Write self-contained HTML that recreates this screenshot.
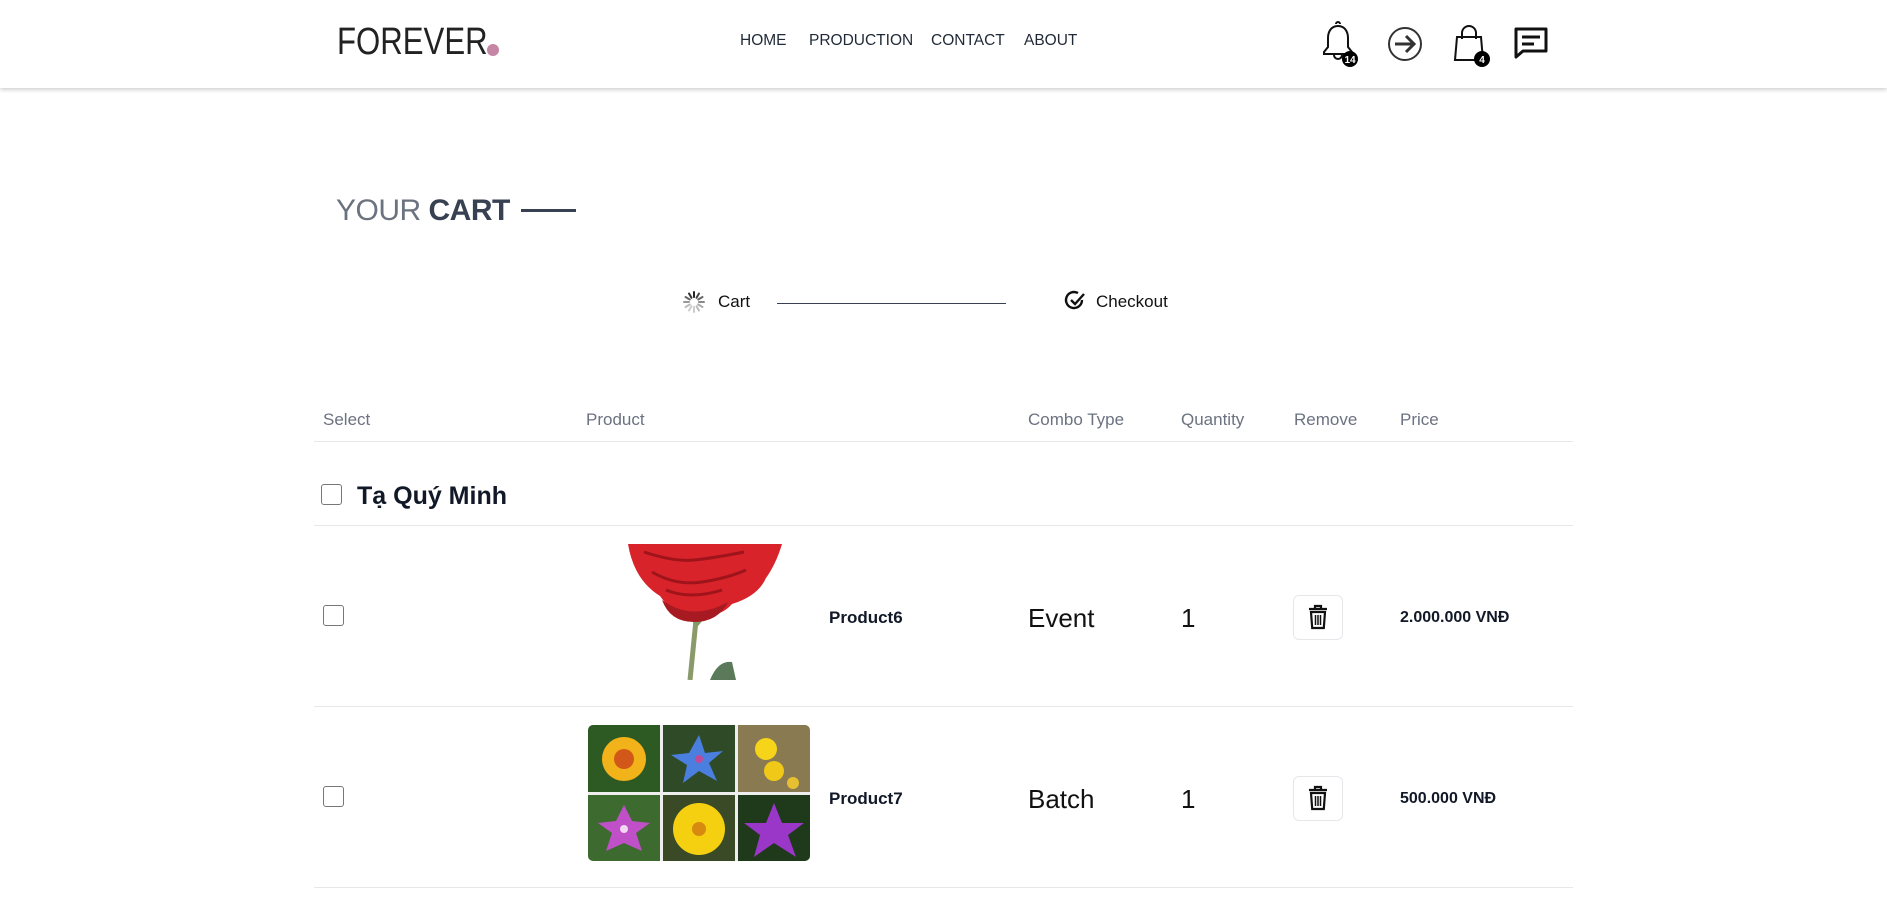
<!DOCTYPE html>
<html><head><meta charset="utf-8">
<style>
*{margin:0;padding:0;box-sizing:border-box}
body{width:1887px;height:919px;background:#fff;font-family:"Liberation Sans","Noto Sans CJK SC",sans-serif;position:relative;overflow:hidden;color:#111}
.a{position:absolute;white-space:nowrap}
.hdr{position:absolute;left:0;top:0;width:1887px;height:88px;background:#fff;box-shadow:0 2px 4px rgba(0,0,0,.18)}
.nav{font-size:15.5px;color:#1f2937;top:32px}
.th{font-size:17px;color:#6b7280;top:410px}
.line{position:absolute;left:314px;width:1259px;height:1px;background:#e5e7eb}
.cb{position:absolute;width:21px;height:21px;border:1.5px solid #777;border-radius:3px;background:#fff}
.big{font-size:26px;color:#111}
.pn{font-size:17px;font-weight:bold;color:#111827}
.pr{font-size:16px;font-weight:bold;color:#111827}
.rm{position:absolute;width:50px;height:45px;border:1px solid #e5e7eb;border-radius:6px;background:#fff}
</style></head><body>
<div class="hdr"></div>
<div class="a" style="left:337px;top:21px;font-size:38px;color:#222;transform:scaleX(.82);transform-origin:left top">FOREVER</div>
<div class="a" style="left:487px;top:44px;width:12px;height:12px;border-radius:50%;background:#c586a5"></div>
<div class="a nav" style="left:740px">HOME</div>
<div class="a nav" style="left:809px">PRODUCTION</div>
<div class="a nav" style="left:931px">CONTACT</div>
<div class="a nav" style="left:1024px">ABOUT</div>

<svg class="a" style="left:1318px;top:20px" width="40" height="50" viewBox="0 0 40 50">
<path d="M18 4a2 2 0 0 1 4 0M20 6c-7 0-10 6-10 12v9l-4 5v2h28v-2l-4-5v-9c0-6-3-12-10-12zM16 35a4 4 0 0 0 8 0" fill="none" stroke="#111" stroke-width="2"/>
<circle cx="32" cy="39" r="8" fill="#000"/><text x="32" y="43" font-size="10" font-weight="bold" fill="#fff" text-anchor="middle" font-family="Liberation Sans">14</text></svg>
<svg class="a" style="left:1387px;top:26px" width="36" height="36" viewBox="0 0 36 36">
<circle cx="18" cy="18" r="16" fill="none" stroke="#333" stroke-width="2"/>
<path d="M8 18h19M19 10l8 8-8 8" fill="none" stroke="#333" stroke-width="3"/></svg>
<svg class="a" style="left:1452px;top:24px" width="44" height="46" viewBox="0 0 44 46">
<path d="M5 13h24l2 23H3z" fill="none" stroke="#111" stroke-width="2"/>
<path d="M10 15V9a7 7 0 0 1 14 0v6" fill="none" stroke="#111" stroke-width="2"/>
<circle cx="30" cy="35" r="8" fill="#000"/><text x="30" y="39" font-size="10" font-weight="bold" fill="#fff" text-anchor="middle" font-family="Liberation Sans">4</text></svg>
<svg class="a" style="left:1513px;top:25px" width="36" height="36" viewBox="0 0 36 36">
<path d="M3 4h30v22H10l-7 6z" fill="none" stroke="#111" stroke-width="3" stroke-linejoin="round"/>
<path d="M9 12h18M9 19h12" stroke="#111" stroke-width="3"/></svg>

<div class="a" style="left:336px;top:194px;font-size:30px;color:#6b7280;letter-spacing:-0.5px">YOUR <b style="color:#374151">CART</b></div>
<div class="a" style="left:521px;top:209px;width:55px;height:3px;background:#374151"></div>

<svg class="a" style="left:682px;top:290px" width="24" height="24" viewBox="0 0 24 24">
<g stroke-width="2" stroke-linecap="round">
<path d="M12 2v5" stroke="#222"/><path d="M17 3.5l-2.5 4.3" stroke="#444"/><path d="M20.5 7l-4.3 2.5" stroke="#666"/><path d="M22 12h-5" stroke="#888"/><path d="M20.5 17l-4.3-2.5" stroke="#aaa"/><path d="M17 20.5l-2.5-4.3" stroke="#bbb"/><path d="M12 22v-5" stroke="#ccc"/><path d="M7 20.5l2.5-4.3" stroke="#ccc"/><path d="M3.5 17l4.3-2.5" stroke="#bbb"/><path d="M2 12h5" stroke="#999"/><path d="M3.5 7l4.3 2.5" stroke="#666"/><path d="M7 3.5l2.5 4.3" stroke="#333"/></g></svg>
<div class="a" style="left:718px;top:292px;font-size:17px;color:#111">Cart</div>
<div class="a" style="left:777px;top:303px;width:229px;height:1px;background:#374151"></div>
<svg class="a" style="left:1063px;top:289px" width="24" height="24" viewBox="0 0 24 24">
<path d="M19 11a8 8 0 1 1-4-6.9" fill="none" stroke="#111" stroke-width="2.4"/>
<path d="M8 11l4 4 9-10" fill="none" stroke="#111" stroke-width="2.4"/></svg>
<div class="a" style="left:1096px;top:292px;font-size:17px;color:#111">Checkout</div>

<div class="a th" style="left:323px">Select</div>
<div class="a th" style="left:586px">Product</div>
<div class="a th" style="left:1028px">Combo Type</div>
<div class="a th" style="left:1181px">Quantity</div>
<div class="a th" style="left:1294px">Remove</div>
<div class="a th" style="left:1400px">Price</div>
<div class="line" style="top:441px"></div>

<div class="cb" style="left:321px;top:484px"></div>
<div class="a" style="left:357px;top:482px;font-size:25px;font-weight:bold;color:#111827">Tạ Quý Minh</div>
<div class="line" style="top:525px"></div>

<div class="cb" style="left:323px;top:605px"></div>
<svg class="a" style="left:626px;top:544px" width="158" height="136" viewBox="0 0 158 136">
<path d="M64 136l6-60" stroke="#8a9a6a" stroke-width="5"/>
<path d="M84 136q8-20 22-18l4 18z" fill="#5a7a5a"/>
<path d="M56 70q14-8 26 0l-10 12z" fill="#7a9a6a"/>
<path d="M2 0h154q-6 20-16 34-8 18-34 26-12 14-36 12-24-2-36-20Q8 36 2 0z" fill="#d8232a"/>
<path d="M18 8q30 10 50 8t50-8M26 28q24 14 50 10t44-12M40 46q24 10 56 0" fill="none" stroke="#9e141a" stroke-width="3"/>
<path d="M36 56q30 22 66 2q-10 20-34 20t-32-22z" fill="#a81a22"/>
</svg>
<div class="a pn" style="left:829px;top:608px">Product6</div>
<div class="a big" style="left:1028px;top:603px">Event</div>
<div class="a big" style="left:1181px;top:603px">1</div>
<div class="rm" style="left:1293px;top:595px"></div>
<svg class="a" style="left:1306px;top:604px" width="24" height="26" viewBox="0 0 24 26">
<path d="M9 4V2h6v2M3 5h18" stroke="#111" stroke-width="2.2" fill="none"/>
<path d="M5 8h14l-1.2 16H6.2z" fill="none" stroke="#111" stroke-width="2.2"/>
<path d="M9.5 11v10M12 11v10M14.5 11v10" stroke="#111" stroke-width="1.5"/></svg>
<div class="a pr" style="left:1400px;top:609px">2.000.000 VNĐ</div>
<div class="line" style="top:706px"></div>

<div class="cb" style="left:323px;top:786px"></div>
<svg class="a" style="left:588px;top:725px" width="222" height="136" viewBox="0 0 222 136">
<defs><clipPath id="r"><rect width="222" height="136" rx="5"/></clipPath></defs>
<g clip-path="url(#r)">
<rect width="222" height="136" fill="#eee"/>
<rect x="0" y="0" width="72" height="67" fill="#2d5a22"/>
<circle cx="36" cy="34" r="22" fill="#f2b21a"/><circle cx="36" cy="34" r="10" fill="#d2581a"/>
<rect x="75" y="0" width="72" height="67" fill="#2f4a26"/>
<path d="M111 10l6 18 18-2-14 12 8 18-18-10-16 12 4-18-16-10 18-2z" fill="#4a7fe0"/><circle cx="111" cy="34" r="4" fill="#c04a9a"/>
<rect x="150" y="0" width="72" height="67" fill="#8a7a52"/>
<circle cx="178" cy="24" r="11" fill="#f5d41a"/><circle cx="186" cy="46" r="10" fill="#f0c818"/><circle cx="205" cy="58" r="6" fill="#e6c030"/>
<rect x="0" y="70" width="72" height="66" fill="#3d6a2e"/>
<path d="M36 80l8 16 18 2-14 10 6 18-18-8-18 8 6-18-14-10 18-2z" fill="#c050c8"/><circle cx="36" cy="104" r="4" fill="#f0d8f0"/>
<rect x="75" y="70" width="72" height="66" fill="#3a4a26"/>
<circle cx="111" cy="104" r="26" fill="#f5d010"/><circle cx="111" cy="104" r="7" fill="#d88a10"/>
<rect x="150" y="70" width="72" height="66" fill="#1f3a1a"/>
<path d="M186 78l8 20 22 0-16 12 8 22-22-14-20 14 6-22-16-12h22z" fill="#9a36c8"/>
</g></svg>
<div class="a pn" style="left:829px;top:789px">Product7</div>
<div class="a big" style="left:1028px;top:784px">Batch</div>
<div class="a big" style="left:1181px;top:784px">1</div>
<div class="rm" style="left:1293px;top:776px"></div>
<svg class="a" style="left:1306px;top:785px" width="24" height="26" viewBox="0 0 24 26">
<path d="M9 4V2h6v2M3 5h18" stroke="#111" stroke-width="2.2" fill="none"/>
<path d="M5 8h14l-1.2 16H6.2z" fill="none" stroke="#111" stroke-width="2.2"/>
<path d="M9.5 11v10M12 11v10M14.5 11v10" stroke="#111" stroke-width="1.5"/></svg>
<div class="a pr" style="left:1400px;top:790px">500.000 VNĐ</div>
<div class="line" style="top:887px"></div>
</body></html>
